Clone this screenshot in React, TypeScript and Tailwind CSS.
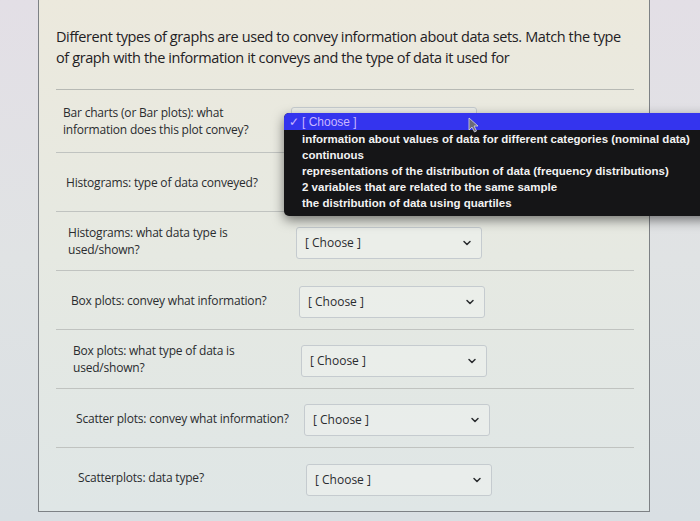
import React from 'react';
import { ChevronDown } from 'lucide-react';

interface Row {
  lines: string[];
  pad: string;
  open?: boolean;
  covered?: boolean;
}

const rows: Row[] = [
  { lines: ['Bar charts (or Bar plots): what', 'information does this plot convey?'], pad: 'pl-[7px]', open: true, covered: true },
  { lines: ['Histograms: type of data conveyed?'], pad: 'pl-[10px]', covered: true },
  { lines: ['Histograms: what data type is', 'used/shown?'], pad: 'pl-[12px]' },
  { lines: ['Box plots: convey what information?'], pad: 'pl-[15px]' },
  { lines: ['Box plots: what type of data is', 'used/shown?'], pad: 'pl-[17px]' },
  { lines: ['Scatter plots: convey what information?'], pad: 'pl-[20px]' },
  { lines: ['Scatterplots: data type?'], pad: 'pl-[22px]' },
];

const options = [
  'information about values of data for different categories (nominal data)',
  'continuous',
  'representations of the distribution of data (frequency distributions)',
  '2 variables that are related to the same sample',
  'the distribution of data using quartiles',
];

// open select list, drawn the way the browser shows it
function OptionMenu() {
  return (
    <div className="absolute left-[-7px] top-[6px] z-10 w-[430px] rounded-[5px] bg-[#151517] shadow-[0_4px_12px_rgba(0,0,0,0.5)] font-['Liberation_Sans',sans-serif] text-[11.5px] font-bold leading-[16px] text-[#f2f2f2]">
      <div className="flex h-[17px] items-center rounded-t-[5px] bg-[#3434ee] pl-[5px] text-[12px] font-normal text-[#c9b6ff]">
        <span className="w-[13px]">✓</span>
        <span>[ Choose ]</span>
      </div>
      <div className="pb-[5px] pt-[1px]">
        {options.map((o) => (
          <div key={o} className="whitespace-nowrap pl-[18px]">
            {o}
          </div>
        ))}
      </div>
      <svg className="absolute left-[184px] top-[4px]" width="11" height="16" viewBox="0 0 11 16">
        <path d="M1 1 L1 13 L4 10 L6.5 15 L8.5 14 L6 9 L10 9 Z" fill="#6a6a78" stroke="#d8d8e0" strokeWidth="0.8" />
      </svg>
    </div>
  );
}

export default function App() {
  return (
    <div className="h-[521px] w-[700px] overflow-hidden bg-gradient-to-b from-[#e3dfe6] via-[#e0e3e4] to-[#d9dfe3] font-['Open_Sans',sans-serif]">
      <div className="ml-[38px] flex h-[512px] w-[612px] flex-col border-x border-b border-[#7d8185] bg-gradient-to-b from-[#ece9dd] via-[#e6e9e2] to-[#dfe6e6] pl-[17px] pr-[15px]">
        {/* Question text */}
        <p className="mt-[26px] whitespace-nowrap text-[14.5px] leading-[21px] tracking-[-0.4px] text-[#1f2124]">
          Different types of graphs are used to convey information about data sets. Match the type
          <br />
          of graph with the information it conveys and the type of data it used for
        </p>
        <div className="mt-[21px] border-t border-[#b7b9b4]" />

        {/* Matching rows */}
        {rows.map((row, i) => (
          <div
            key={i}
            className={`flex items-center ${row.pad} ${i === 0 ? 'h-[63px]' : 'h-[59px]'} ${
              i < rows.length - 1 ? 'border-b border-[#c0c3c0]' : ''
            }`}
          >
            <div className="w-[228px] shrink-0 text-[12px] leading-[17px] tracking-[-0.2px] text-[#2a2c2f]">
              {row.lines.map((l) => (
                <div key={l} className="whitespace-nowrap">
                  {l}
                </div>
              ))}
            </div>
            <div className="relative mt-[4px] w-[186px]">
              <div className="flex h-[32px] items-center justify-between rounded-[3px] border border-[#c5cbcf] bg-[#eef1ee]/60 pl-[8px] pr-[8px] text-[12px] text-[#2a2c2f]">
                <span className={row.covered ? 'invisible' : ''}>[ Choose ]</span>
                <ChevronDown size={12} strokeWidth={3} className="text-[#2a2c2f]" />
              </div>
              {row.open && <OptionMenu />}
            </div>
          </div>
        ))}
      </div>
    </div>
  );
}
